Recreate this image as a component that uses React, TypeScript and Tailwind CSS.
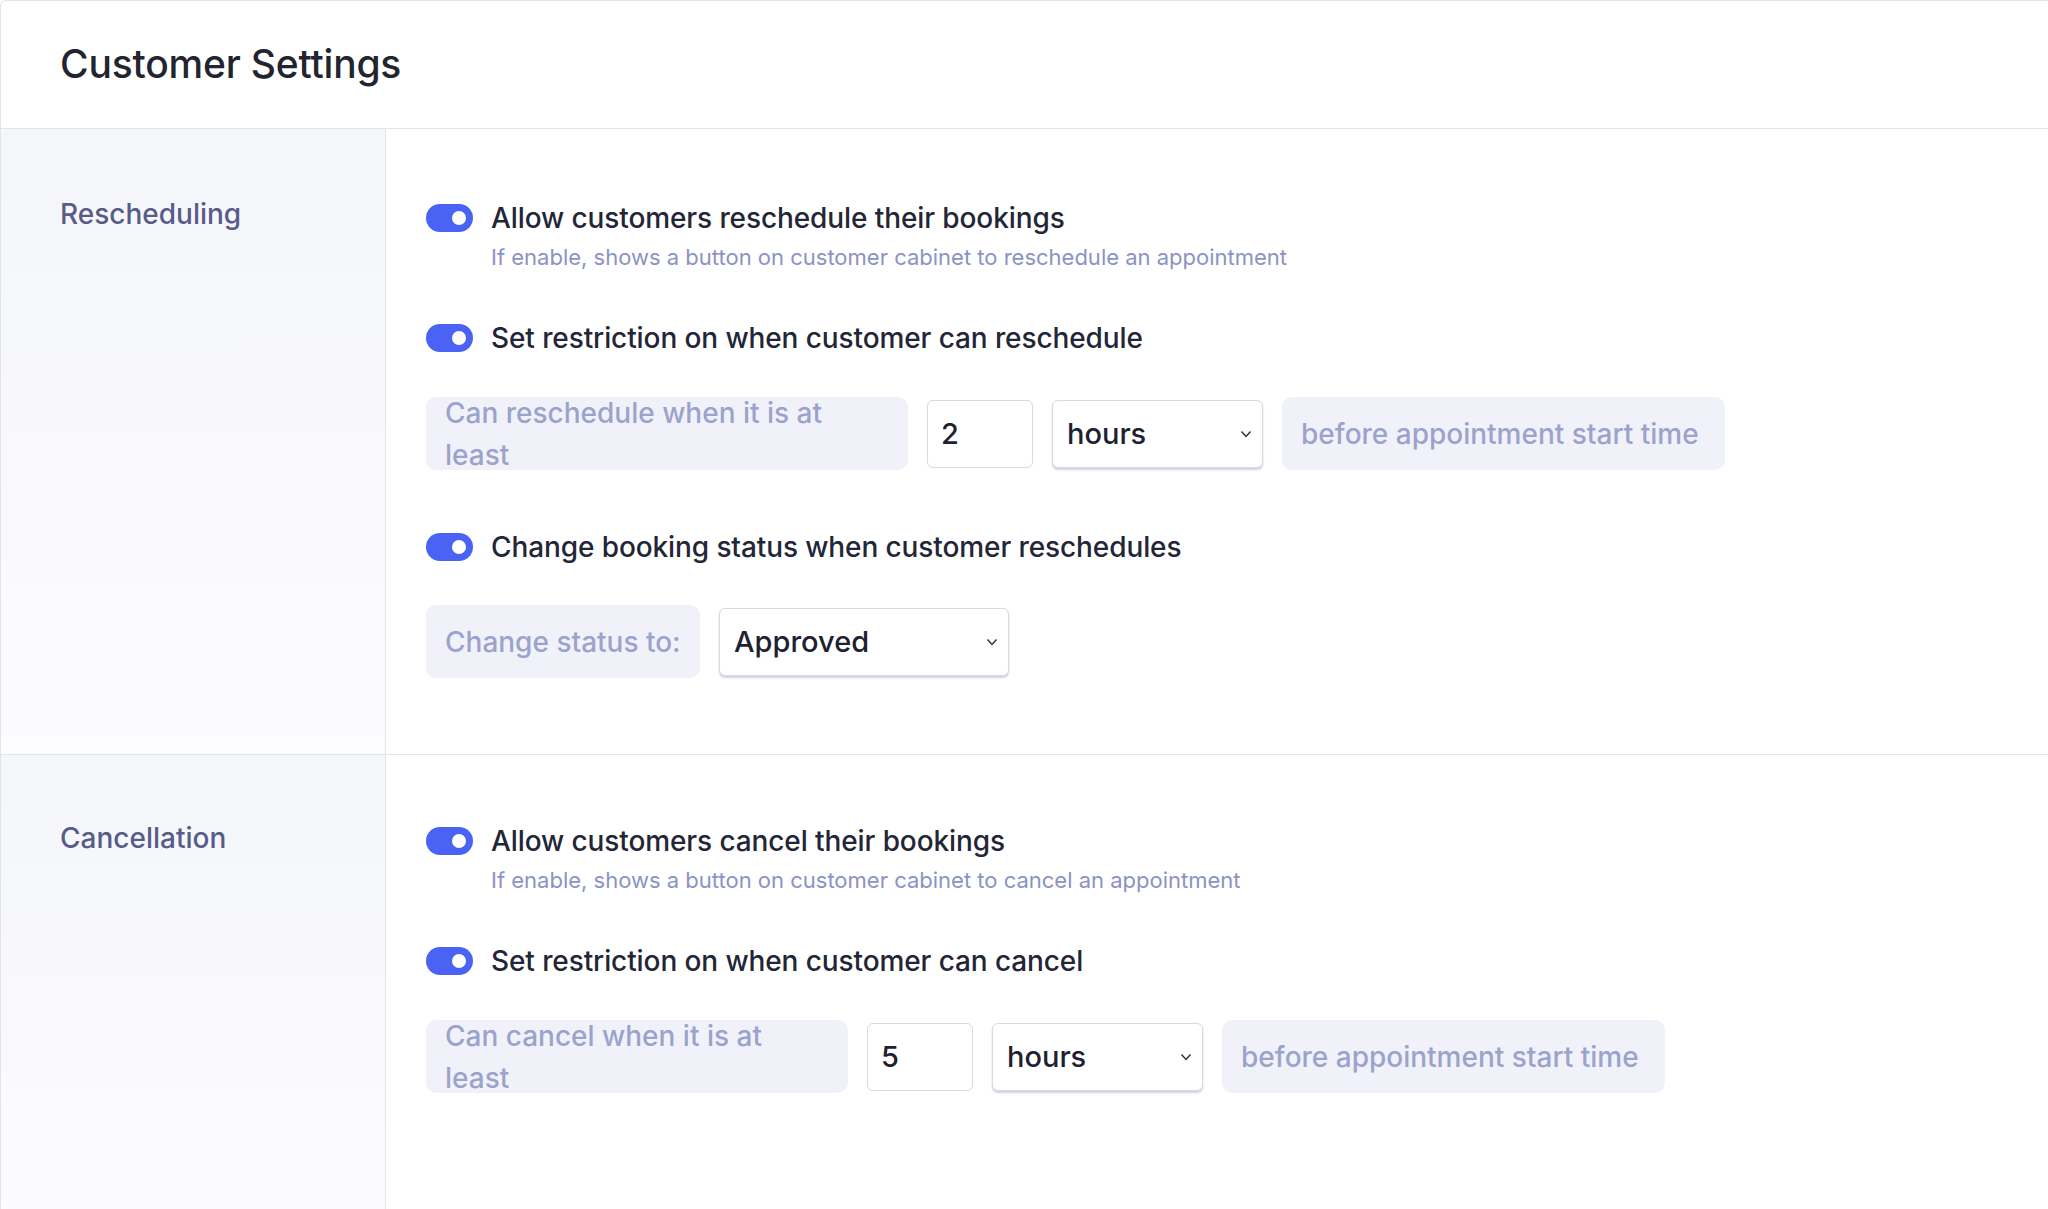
import React from 'react'

const font = { fontFamily: 'Inter, "Liberation Sans", sans-serif' }

function Toggle() {
  return (
    <div className="relative h-[28px] w-[47px] shrink-0 rounded-full bg-[#4a63f5]">
      <div className="absolute right-[7px] top-[7px] h-[14px] w-[14px] rounded-full bg-white" />
    </div>
  )
}

function Row({ label, desc, className = '' }: { label: string; desc?: string; className?: string }) {
  return (
    <div className={className}>
      <div className="flex h-[34px] items-center gap-[18px]">
        <Toggle />
        <span className="text-[28px] font-medium tracking-[-0.1px] text-[#222636]">{label}</span>
      </div>
      {desc && <div className="mt-[8px] pl-[65px] text-[22px] leading-[28px] text-[#8b93c4]">{desc}</div>}
    </div>
  )
}

function Pill({ children, w }: { children: React.ReactNode; w: string }) {
  return (
    <div className={`flex h-[73px] items-center rounded-[10px] bg-[#f1f2f9] px-[19px] text-[28px] font-medium text-[#9ba3cc] ${w}`}>
      {children}
    </div>
  )
}

function Select({ value, w }: { value: string; w: string }) {
  return (
    <div className={`flex h-[68px] items-center justify-between rounded-[6px] border border-[#d7d9e4] bg-white pl-[14px] pr-[10px] text-[29px] font-medium text-[#1e2130] shadow-[0_2px_2px_rgba(120,125,160,0.35)] ${w}`}>
      <span>{value}</span>
      <svg width="12" height="8" viewBox="0 0 12 8" fill="none" stroke="#333" strokeWidth="1.5">
        <path d="M1.5 1.5 6 6.5l4.5-5" />
      </svg>
    </div>
  )
}

function Num({ value }: { value: string }) {
  return (
    <div className="flex h-[68px] w-[106px] items-center rounded-[6px] border border-[#d7d9e4] bg-white px-[13px] text-[29px] font-medium text-[#1e2130]">
      {value}
    </div>
  )
}

function Limit({ label, num, lw }: { label: string; num: string; lw: string }) {
  return (
    <div className="flex items-center gap-[19px]">
      <Pill w={lw}>{label}</Pill>
      <Num value={num} />
      <Select value="hours" w="w-[211px]" />
      <Pill w="w-[443px]">before appointment start time</Pill>
    </div>
  )
}

export default function App() {
  return (
    <div style={font} className="h-[1209px] w-[2048px] overflow-hidden bg-white">
      <div className="h-full rounded-tl-[6px] border-l border-t border-[#e3e4ea]">
        <div className="flex h-[128px] items-center border-b border-[#e3e4ea] pl-[59px]">
          <h1 className="text-[39px] font-medium tracking-[-0.2px] text-[#22252f]">Customer Settings</h1>
        </div>

        <div className="flex h-[626px] border-b border-[#e3e4ea]">
          <div className="w-[385px] shrink-0 border-r border-[#e3e4ea] bg-gradient-to-b from-[#f5f6fa] to-[#fcfcfe] pl-[59px] pt-[68px]">
            <div className="text-[28px] font-medium leading-[34px] text-[#575c88]">Rescheduling</div>
          </div>
          <div className="flex-1 pl-[40px] pt-[72px]">
            <Row label="Allow customers reschedule their bookings" desc="If enable, shows a button on customer cabinet to reschedule an appointment" />
            <Row className="mt-[50px]" label="Set restriction on when customer can reschedule" />
            <div className="mt-[42px]">
              <Limit label="Can reschedule when it is at least" num="2" lw="w-[482px]" />
            </div>
            <Row className="mt-[60px]" label="Change booking status when customer reschedules" />
            <div className="mt-[41px] flex items-center gap-[19px]">
              <Pill w="w-[274px]">Change status to:</Pill>
              <Select value="Approved" w="w-[290px]" />
            </div>
          </div>
        </div>

        <div className="flex h-[460px]">
          <div className="w-[385px] shrink-0 border-r border-[#e3e4ea] bg-gradient-to-b from-[#f5f6fa] to-[#fcfcfe] pl-[59px] pt-[66px]">
            <div className="text-[28px] font-medium leading-[34px] text-[#575c88]">Cancellation</div>
          </div>
          <div className="flex-1 pl-[40px] pt-[69px]">
            <Row label="Allow customers cancel their bookings" desc="If enable, shows a button on customer cabinet to cancel an appointment" />
            <Row className="mt-[50px]" label="Set restriction on when customer can cancel" />
            <div className="mt-[42px]">
              <Limit label="Can cancel when it is at least" num="5" lw="w-[422px]" />
            </div>
          </div>
        </div>
      </div>
    </div>
  )
}
